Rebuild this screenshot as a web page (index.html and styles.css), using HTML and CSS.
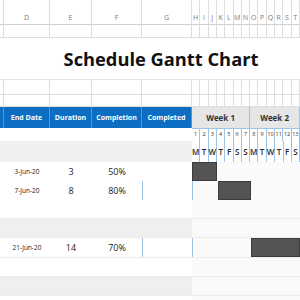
FILE: index.html
```html
<!DOCTYPE html>
<html>
<head>
<meta charset="utf-8">
<link rel="stylesheet" href="styles.css">
</head>
<body>
<div class="sheet">
  <div class="row letters">
    <div class="cell"></div><div class="cell">D</div><div class="cell">E</div><div class="cell">F</div><div class="cell">G</div>
    <div class="days">
      <div class="cell">H</div><div class="cell">I</div><div class="cell">J</div><div class="cell">K</div><div class="cell">L</div><div class="cell">M</div><div class="cell">N</div><div class="cell">O</div><div class="cell">P</div><div class="cell">Q</div><div class="cell">R</div><div class="cell">S</div><div class="cell">T</div>
    </div>
  </div>
  <div class="row blank h13">
    <div class="cell"></div><div class="cell"></div><div class="cell"></div><div class="cell"></div><div class="cell"></div>
    <div class="days lines"></div>
  </div>
  <div class="row title">
    <h1>Schedule Gantt Chart</h1>
  </div>
  <div class="row blank h15">
    <div class="cell"></div><div class="cell"></div><div class="cell"></div><div class="cell"></div><div class="cell"></div>
    <div class="days lines"></div>
  </div>
  <div class="row blank h12">
    <div class="cell"></div><div class="cell"></div><div class="cell"></div><div class="cell"></div><div class="cell"></div>
    <div class="days lines"></div>
  </div>
  <div class="row head">
    <div class="th"></div><div class="th">End Date</div><div class="th">Duration</div><div class="th">Completion</div><div class="th">Completed</div>
    <div class="weeks">
      <div class="week w1">Week 1</div><div class="week w2">Week 2</div>
    </div>
  </div>
  <div class="row nums">
    <div class="fill"></div>
    <div class="days">
      <div class="d">1</div><div class="d">2</div><div class="d">3</div><div class="d">4</div><div class="d">5</div><div class="d">6</div><div class="d">7</div><div class="d">8</div><div class="d">9</div><div class="d">10</div><div class="d">11</div><div class="d">12</div><div class="d">13</div>
    </div>
  </div>
  <div class="row dow">
    <div class="fill gray"></div>
    <div class="days">
      <div class="d">M</div><div class="d">T</div><div class="d">W</div><div class="d">T</div><div class="d">F</div><div class="d">S</div><div class="d">S</div><div class="d">M</div><div class="d">T</div><div class="d">W</div><div class="d">T</div><div class="d">F</div><div class="d">S</div>
    </div>
  </div>
  <div class="row task">
    <div class="td"></div><div class="td date">3-Jun-20</div><div class="td num">3</div><div class="td num">50%</div><div class="td"></div>
    <div class="days chart"><div class="bar b1"></div></div>
  </div>
  <div class="row task">
    <div class="td"></div><div class="td date">7-Jun-20</div><div class="td num">8</div><div class="td num">80%</div><div class="td mark"></div>
    <div class="days chart mark"><div class="bar b2"></div></div>
  </div>
  <div class="row task">
    <div class="fill"></div><div class="days chart"></div>
  </div>
  <div class="row task band">
    <div class="fill gray"></div><div class="days chart"></div>
  </div>
  <div class="row task tall">
    <div class="td"></div><div class="td date">21-Jun-20</div><div class="td num">14</div><div class="td num">70%</div><div class="td mark"></div>
    <div class="days chart mark"><div class="bar b3"></div></div>
  </div>
  <div class="row task">
    <div class="fill"></div><div class="days chart"></div>
  </div>
  <div class="row task band">
    <div class="fill gray"></div><div class="days chart"></div>
  </div>
  <div class="row task">
    <div class="fill"></div><div class="days chart"></div>
  </div>
</div>
</body>
</html>
```

FILE: styles.css
```css
* { box-sizing: border-box; margin: 0; padding: 0; }
body { background: #fff; font-family: "Open Sans", "Liberation Sans", sans-serif; color: #222; overflow: hidden; }
.sheet { width: 300px; }
.row { display: grid; grid-template-columns: 4px 46px 42px 50px 50px 108px; }
.days { display: grid; grid-template-columns: repeat(13, 1fr); }

.cell { border-right: 1px solid #dedede; border-bottom: 1px solid #dedede; }
.lines { border-bottom: 1px solid #dedede;
  background: repeating-linear-gradient(90deg, transparent 0 calc(108px / 13 - 1px), #dedede calc(108px / 13 - 1px) calc(108px / 13)); }

.letters { height: 25px; }
.letters .cell { font-size: 7px; color: #7a7a7a; text-align: center; padding-top: 13px; border-bottom-color: #d0d0d0; }
.h13 { height: 13px; }
.h15 { height: 15px; }
.h12 { height: 12px; }

.title { height: 42px; border-bottom: 1px solid #e4e4e4; }
.title h1 { grid-column: 1 / -1; text-align: center; padding-left: 22px; font-size: 18.3px; font-weight: 700; line-height: 42px; color: #111; }

.head { height: 21px; }
.th { background: #0b6ec2; color: #fff; font-size: 7px; font-weight: 700; text-align: center; line-height: 21px; border-right: 1px solid #4d97d6; }
.weeks { display: grid; grid-template-columns: 7fr 6fr; }
.week { background: #e6e6e6; font-size: 8px; font-weight: 700; text-align: center; line-height: 21px; color: #333; border-right: 1px solid #9dc3e6; border-bottom: 1px solid #9dc3e6; }

.fill { grid-column: 1 / 6; background: #fff; }
.gray { background: #efefef; }
.d { text-align: center; color: #333; border-right: 1px solid #9dc3e6; }
.nums { height: 13px; }
.nums .d { font-size: 5.5px; line-height: 13px; }
.dow { height: 21px; }
.dow .days { background: #fff; border-bottom: 1px solid #9dc3e6; }
.dow .d { font-size: 8px; font-weight: 600; line-height: 21px; color: #2a2a2a; }

.task { height: 19px; border-bottom: 1px solid #ececec; }
.task.tall { height: 20px; }
.td { background: #fff; text-align: center; line-height: 19px; }
.date { font-size: 6.5px; color: #222; }
.num { font-size: 9px; color: #222; }
.td.mark { border-left: 1px solid #9dc3e6; }
.chart { background: #fafafa; }
.chart.mark { border-left: 1px solid #9dc3e6; }
.band .chart { background: #f9f9f9; }
.bar { background: #545454; border: 1px solid #3c3c3c; }
.b1 { grid-column: 1 / 4; }
.b2 { grid-column: 4 / 8; }
.b3 { grid-column: 8 / 14; }
```
